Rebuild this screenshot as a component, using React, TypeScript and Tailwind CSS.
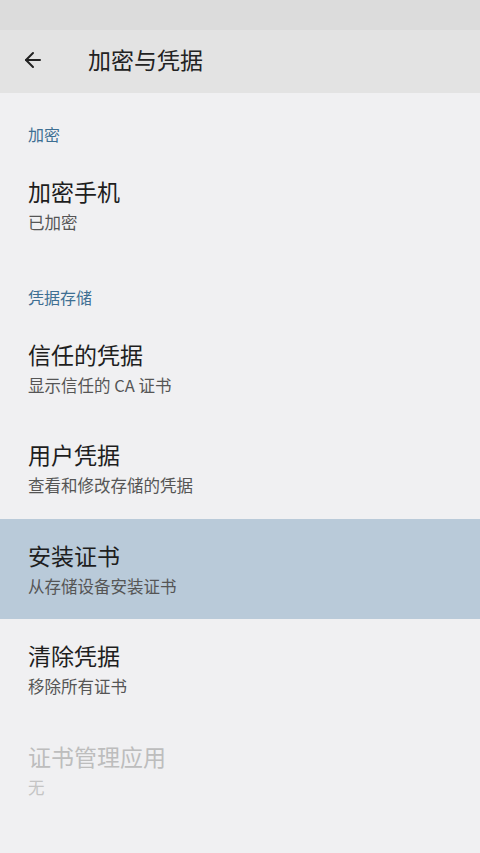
import { ArrowLeft } from 'lucide-react';

type Item = { title: string; sub: string; active?: boolean; disabled?: boolean };

const SECTIONS: { header: string; items: Item[] }[] = [
  {
    header: '加密',
    items: [{ title: '加密手机', sub: '已加密' }],
  },
  {
    header: '凭据存储',
    items: [
      { title: '信任的凭据', sub: '显示信任的 CA 证书' },
      { title: '用户凭据', sub: '查看和修改存储的凭据' },
      { title: '安装证书', sub: '从存储设备安装证书', active: true },
      { title: '清除凭据', sub: '移除所有证书' },
      { title: '证书管理应用', sub: '无', disabled: true },
    ],
  },
];

const font = { fontFamily: '"Noto Sans CJK SC", "Noto Sans", sans-serif' };

export default function App() {
  return (
    <div className="w-[480px] h-[853px] bg-[#f0f0f2] flex flex-col overflow-hidden" style={font}>
      <div className="h-[30px] bg-[#dcdcdc]" />
      <header className="h-[63px] bg-[#e3e3e3] flex items-center pb-[4px]">
        <div className="w-[88px] pl-[21px] flex items-center">
          <ArrowLeft size={24} strokeWidth={2} className="text-[#222]" />
        </div>
        <h1 className="text-[23px] text-[#222] leading-none">加密与凭据</h1>
      </header>
      <main className="flex flex-col">
        {SECTIONS.map(section => (
          <div key={section.header}>
            <div className="h-[62px] flex items-end pb-[13px] px-[28px]">
              <p className="text-[16px] leading-none text-[#3e6f93]">{section.header}</p>
            </div>
            {section.items.map(item => (
              <div
                key={item.title}
                className={
                  'h-[100.5px] px-[28px] flex flex-col justify-center gap-[11px] ' +
                  (item.active ? 'bg-[#b9cad9]' : '')
                }
              >
                <p className={'text-[23px] leading-none ' + (item.disabled ? 'text-[#bdbdbd]' : 'text-[#1e1e1e]')}>
                  {item.title}
                </p>
                <p className={'text-[16.5px] leading-none ' + (item.disabled ? 'text-[#c4c4c4]' : 'text-[#555]')}>
                  {item.sub}
                </p>
              </div>
            ))}
          </div>
        ))}
      </main>
    </div>
  );
}
